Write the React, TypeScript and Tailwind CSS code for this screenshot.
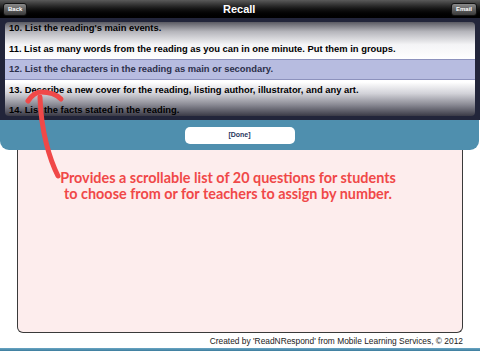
const questions = [
    "10. List the reading's main events.",
    '11. List as many words from the reading as you can in one minute. Put them in groups.',
    '12. List the characters in the reading as main or secondary.',
    '13. Describe a new cover for the reading, listing author, illustrator, and any art.',
    '14. List the facts stated in the reading.',
];

const selectedIndex = 2;

function NavButton({ label }: { label: string }) {
    return (
        <button
            type="button"
            className="h-[13px] px-[4px] rounded-[3px] border border-[#111] bg-gradient-to-b from-[#8a8a8a] to-[#3a3a3a] text-white text-[6px] font-bold leading-none"
        >
            {label}
        </button>
    );
}

export default function App() {
    return (
        <div className="relative w-[480px] h-[351px] bg-white overflow-hidden font-['Liberation_Sans',Arial,sans-serif]">
            {/* top bar */}
            <header className="h-[18px] flex items-center justify-between px-[3px] bg-gradient-to-b from-[#5a5a5a] via-[#141414] to-black">
                <NavButton label="Back" />
                <span className="text-white text-[11px] font-bold leading-none">Recall</span>
                <NavButton label="Email" />
            </header>

            {/* picker */}
            <div className="h-[102px] bg-[#22253a] px-[5px] pt-[4px] pb-[4px]">
                <div className="h-full rounded-[4px] overflow-hidden bg-[linear-gradient(to_bottom,#5a5a62_0%,#b4b4ba_10%,#f4f4f6_24%,#ffffff_40%,#ffffff_64%,#d2d2d8_76%,#8a8a94_88%,#3a3a46_100%)]">
                    <div className="-mt-[4px]">
                        {questions.map((q, i) => (
                            <div
                                key={q}
                                className={
                                    i === selectedIndex
                                        ? 'h-[20.5px] flex items-center px-[4px] bg-[#b7bce0] border-y border-[#8d92bd] text-[#2c2f4a] text-[9.4px] font-bold whitespace-nowrap'
                                        : 'h-[20.5px] flex items-center px-[4px] text-black text-[9.4px] font-bold whitespace-nowrap'
                                }
                            >
                                {q}
                            </div>
                        ))}
                    </div>
                </div>
            </div>

            {/* done bar */}
            <div className="w-[479px] h-[30px] bg-[#4f8fae] rounded-b-[9px] flex items-center justify-center">
                <button
                    type="button"
                    className="w-[110px] h-[17px] rounded-[5px] bg-white text-[#27365e] text-[7px] font-bold"
                >
                    [Done]
                </button>
            </div>

            {/* answer panel */}
            <div className="mx-[17px] h-[183px] bg-[#fdeded] border-x border-b border-[#3a3a3a] rounded-b-[6px]" />

            <p className="mt-[3px] pr-[17px] text-right text-[8.4px] text-[#222] leading-[10px]">
                Created by 'ReadNRespond' from Mobile Learning Services, © 2012
            </p>
            <div className="absolute left-0 right-0 bottom-0 h-[3px] bg-gradient-to-b from-[#6aa6c4] to-[#3b7c9c]" />

            {/* annotation */}
            <div className="absolute left-[28px] top-[170px] w-[400px] text-center text-[#f04848] text-[14.4px] font-bold leading-[16px] font-['Lato',sans-serif]">
                <p>Provides a scrollable list of 20 questions for students</p>
                <p>to choose from or for teachers to assign by number.</p>
            </div>
            <svg className="absolute left-0 top-0 pointer-events-none" width="480" height="351" viewBox="0 0 480 351">
                <path
                    d="M58 176 C50 160 41 132 40 97"
                    fill="none"
                    stroke="#f04848"
                    strokeWidth="5"
                    strokeLinecap="round"
                />
                <path
                    d="M28 101 Q34 92 41 92 Q54 92 61 99"
                    fill="none"
                    stroke="#f04848"
                    strokeWidth="5"
                    strokeLinecap="round"
                />
            </svg>
        </div>
    );
}
